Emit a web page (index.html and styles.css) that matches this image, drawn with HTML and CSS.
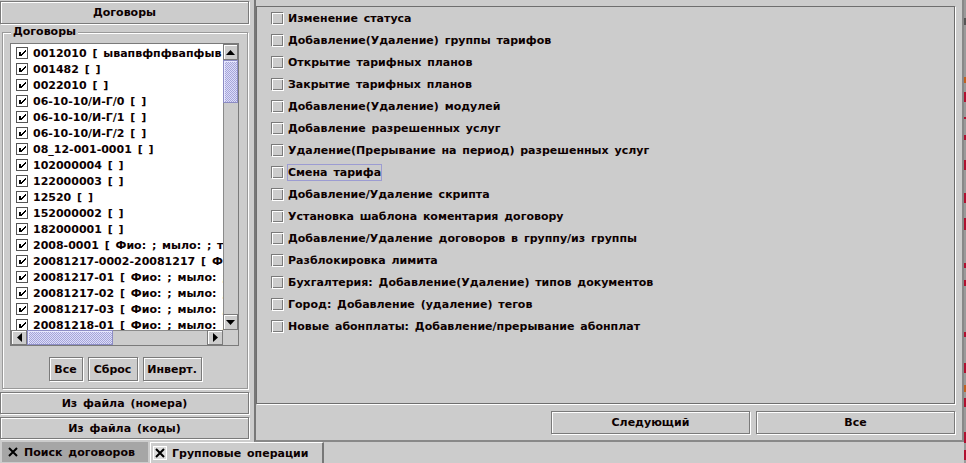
FILE: index.html
```html
<!DOCTYPE html>
<html lang="ru">
<head>
<meta charset="utf-8">
<title>Групповые операции</title>
<link rel="stylesheet" href="styles.css">
</head>
<body>
<svg class="defs" width="0" height="0" aria-hidden="true">
  <symbol id="box" viewBox="0 0 13 13">
    <rect x="0.5" y="0.5" width="11" height="11" fill="none" stroke="#7a7a7a"/>
    <rect x="1.5" y="1.5" width="11" height="11" fill="none" stroke="#ffffff"/>
  </symbol>
  <symbol id="chk" viewBox="0 0 13 13">
    <rect x="0.5" y="0.5" width="11" height="11" fill="none" stroke="#555555"/>
    <g fill="#000">
      <rect x="3" y="5" width="2" height="4"/>
      <rect x="9" y="3" width="1" height="2"/>
      <rect x="8" y="4" width="1" height="2"/>
      <rect x="7" y="5" width="1" height="2"/>
      <rect x="6" y="6" width="1" height="2"/>
      <rect x="5" y="7" width="1" height="2"/>
    </g>
  </symbol>
</svg>
<div class="screen">
  <div class="app">
    <div class="main">
      <div class="left">
        <div class="btn hdr">Договоры</div>
        <div class="group">
          <span class="group-title">Договоры</span>
          <div class="scrollpane">
            <div class="list">
              <div class="item"><svg class="cb"><use href="#chk"/></svg><span>0012010 [ ывапвфпфвапфыв ]</span></div>
              <div class="item"><svg class="cb"><use href="#chk"/></svg><span>001482 [ ]</span></div>
              <div class="item"><svg class="cb"><use href="#chk"/></svg><span>0022010 [ ]</span></div>
              <div class="item"><svg class="cb"><use href="#chk"/></svg><span>06-10-10/И-Г/0 [ ]</span></div>
              <div class="item"><svg class="cb"><use href="#chk"/></svg><span>06-10-10/И-Г/1 [ ]</span></div>
              <div class="item"><svg class="cb"><use href="#chk"/></svg><span>06-10-10/И-Г/2 [ ]</span></div>
              <div class="item"><svg class="cb"><use href="#chk"/></svg><span>08_12-001-0001 [ ]</span></div>
              <div class="item"><svg class="cb"><use href="#chk"/></svg><span>102000004 [ ]</span></div>
              <div class="item"><svg class="cb"><use href="#chk"/></svg><span>122000003 [ ]</span></div>
              <div class="item"><svg class="cb"><use href="#chk"/></svg><span>12520 [ ]</span></div>
              <div class="item"><svg class="cb"><use href="#chk"/></svg><span>152000002 [ ]</span></div>
              <div class="item"><svg class="cb"><use href="#chk"/></svg><span>182000001 [ ]</span></div>
              <div class="item"><svg class="cb"><use href="#chk"/></svg><span>2008-0001 [ Фио: ; мыло: ; тел: ]</span></div>
              <div class="item"><svg class="cb"><use href="#chk"/></svg><span>20081217-0002-20081217 [ Фио: ; мыло: ; ]</span></div>
              <div class="item"><svg class="cb"><use href="#chk"/></svg><span>20081217-01 [ Фио: ; мыло: ; тел: ]</span></div>
              <div class="item"><svg class="cb"><use href="#chk"/></svg><span>20081217-02 [ Фио: ; мыло: ; тел: ]</span></div>
              <div class="item"><svg class="cb"><use href="#chk"/></svg><span>20081217-03 [ Фио: ; мыло: ; тел: ]</span></div>
              <div class="item"><svg class="cb"><use href="#chk"/></svg><span>20081218-01 [ Фио: ; мыло: ; тел: ]</span></div>
            </div>
            <div class="vscroll">
              <div class="arrow av"><svg width="9" height="5" viewBox="0 0 9 5"><polygon points="4.5,0 9,5 0,5" fill="#000"/></svg></div>
              <div class="thumb tv"></div>
              <div class="track"></div>
              <div class="arrow av"><svg width="9" height="5" viewBox="0 0 9 5"><polygon points="0,0 9,0 4.5,5" fill="#000"/></svg></div>
            </div>
            <div class="hscroll">
              <div class="arrow ah"><svg width="5" height="9" viewBox="0 0 5 9"><polygon points="0,4.5 5,0 5,9" fill="#000"/></svg></div>
              <div class="thumb th"></div>
              <div class="track"></div>
              <div class="arrow ah"><svg width="5" height="9" viewBox="0 0 5 9"><polygon points="0,0 5,4.5 0,9" fill="#000"/></svg></div>
            </div>
            <div class="corner"></div>
          </div>
          <div class="btnrow">
            <div class="btn sm b1">Все</div>
            <div class="btn sm b2">Сброс</div>
            <div class="btn sm b3">Инверт.</div>
          </div>
        </div>
        <div class="btn wide">Из файла (номера)</div>
        <div class="btn wide">Из файла (коды)</div>
      </div>
      <div class="right">
        <div class="ops">
          <div class="op"><svg class="cb"><use href="#box"/></svg><span>Изменение статуса</span></div>
          <div class="op"><svg class="cb"><use href="#box"/></svg><span>Добавление(Удаление) группы тарифов</span></div>
          <div class="op"><svg class="cb"><use href="#box"/></svg><span>Открытие тарифных планов</span></div>
          <div class="op"><svg class="cb"><use href="#box"/></svg><span>Закрытие тарифных планов</span></div>
          <div class="op"><svg class="cb"><use href="#box"/></svg><span>Добавление(Удаление) модулей</span></div>
          <div class="op"><svg class="cb"><use href="#box"/></svg><span>Добавление разрешенных услуг</span></div>
          <div class="op"><svg class="cb"><use href="#box"/></svg><span>Удаление(Прерывание на период) разрешенных услуг</span></div>
          <div class="op"><svg class="cb"><use href="#box"/></svg><span class="focus">Смена тарифа</span></div>
          <div class="op"><svg class="cb"><use href="#box"/></svg><span>Добавление/Удаление скрипта</span></div>
          <div class="op"><svg class="cb"><use href="#box"/></svg><span>Установка шаблона коментария договору</span></div>
          <div class="op"><svg class="cb"><use href="#box"/></svg><span>Добавление/Удаление договоров в группу/из группы</span></div>
          <div class="op"><svg class="cb"><use href="#box"/></svg><span>Разблокировка лимита</span></div>
          <div class="op"><svg class="cb"><use href="#box"/></svg><span>Бухгалтерия: Добавление(Удаление) типов документов</span></div>
          <div class="op"><svg class="cb"><use href="#box"/></svg><span>Город: Добавление (удаление) тегов</span></div>
          <div class="op"><svg class="cb"><use href="#box"/></svg><span>Новые абонплаты: Добавление/прерывание абонплат</span></div>
        </div>
        <div class="actions">
          <div class="btn act">Следующий</div>
          <div class="btn act">Все</div>
        </div>
      </div>
    </div>
    <div class="tabs">
      <div class="tab tab-a">
        <svg class="x" width="10" height="10" viewBox="0 0 10 10"><path d="M1 1 L9 9 M9 1 L1 9" stroke="#000" stroke-width="2"/></svg>
        <span>Поиск договоров</span>
      </div>
      <div class="tab tab-b">
        <span class="xbox"><svg class="x" width="10" height="10" viewBox="0 0 10 10"><path d="M1 1 L9 9 M9 1 L1 9" stroke="#000" stroke-width="2"/></svg></span>
        <span>Групповые операции</span>
      </div>
    </div>
  </div>
  <div class="edge"></div>
</div>
</body>
</html>
```

FILE: styles.css
```css
html, body {
  margin: 0;
  padding: 0;
}

body {
  background: #cccccc;
  font-family: "DejaVu Sans", "Liberation Sans", sans-serif;
  font-weight: bold;
  font-size: 11px;
  word-spacing: 2px;
  color: #0d0000;
}

.defs {
  position: absolute;
  width: 0;
  height: 0;
  overflow: hidden;
}

.screen {
  display: flex;
  width: 966px;
  height: 463px;
  overflow: hidden;
}

.app {
  width: 964px;
  display: flex;
  flex-direction: column;
}

.edge {
  width: 2px;
  height: 463px;
  background: linear-gradient(to bottom,
    #9a9a9a 0, #9a9a9a 18px, #555 18px, #555 25px, #9a9a9a 25px, #9a9a9a 77px,
    #c06020 77px, #c06020 83px, #9a9a9a 83px, #9a9a9a 92px,
    #b01030 92px, #b01030 102px, #9a9a9a 102px, #9a9a9a 117px,
    #b01030 117px, #b01030 119px, #9a9a9a 119px, #9a9a9a 135px,
    #b01030 135px, #b01030 140px, #9a9a9a 140px, #9a9a9a 160px,
    #b01030 160px, #b01030 170px, #9a9a9a 170px, #9a9a9a 193px,
    #b01030 193px, #b01030 203px, #9a9a9a 203px, #9a9a9a 218px,
    #b01030 218px, #b01030 230px, #9a9a9a 230px, #9a9a9a 263px,
    #b01030 263px, #b01030 268px, #9a9a9a 268px, #9a9a9a 280px,
    #b01030 280px, #b01030 286px, #9a9a9a 286px, #9a9a9a 332px,
    #b01030 332px, #b01030 337px, #9a9a9a 337px, #9a9a9a 363px,
    #b01030 363px, #b01030 373px, #9a9a9a 373px, #9a9a9a 385px,
    #c06020 385px, #c06020 392px, #9a9a9a 392px, #9a9a9a 398px,
    #b01030 398px, #b01030 407px, #9a9a9a 407px, #9a9a9a 432px,
    #b01030 432px, #b01030 443px, #9a9a9a 443px, #9a9a9a 450px,
    #b01030 450px, #b01030 460px, #9a9a9a 460px);
}

.main {
  height: 442px;
  display: flex;
}

/* generic etched button */
.btn {
  box-sizing: border-box;
  border: 1px solid #7a7a7a;
  box-shadow: inset 1px 1px 0 #ffffff, 1px 1px 0 #ffffff;
  display: flex;
  align-items: center;
  justify-content: center;
  white-space: nowrap;
}

/* left column */
.left {
  width: 250px;
  flex: none;
  display: flex;
  flex-direction: column;
}

.hdr {
  margin-top: 1px;
  width: 249px;
  height: 23px;
}

.group {
  position: relative;
  box-sizing: border-box;
  margin: 8px 0 0 2px;
  width: 246px;
  height: 357px;
  border: 1px solid #999999;
  box-shadow: inset 1px 1px 0 #ffffff, 1px 1px 0 #ffffff;
  padding: 10px 0 0 7px;
}

.group-title {
  position: absolute;
  top: -8px;
  left: 8px;
  padding: 0 2px;
  line-height: 14px;
  background: #cccccc;
}

.scrollpane {
  box-sizing: border-box;
  width: 229px;
  height: 303px;
  border: 1px solid #7a7a7a;
  background: #ffffff;
  display: grid;
  grid-template-columns: 212px 15px;
  grid-template-rows: 286px 15px;
}

.list {
  overflow: hidden;
  padding-top: 1px;
}

.item {
  height: 16px;
  display: flex;
  align-items: center;
  padding-left: 5px;
  white-space: nowrap;
}

.cb {
  width: 13px;
  height: 13px;
  flex: none;
  margin-right: 4px;
}

.vscroll {
  display: flex;
  flex-direction: column;
  background: #cccccc;
  box-shadow: inset 1px 0 0 #8a8a8a;
}

.hscroll {
  display: flex;
  background: #cccccc;
  box-shadow: inset 0 1px 0 #8a8a8a;
}

.corner {
  background: #cccccc;
}

.arrow {
  box-sizing: border-box;
  border: 1px solid #7a7a7a;
  box-shadow: inset 1px 1px 0 #ffffff;
  background: #cccccc;
  display: flex;
  align-items: center;
  justify-content: center;
  flex: none;
}

.av {
  height: 16px;
}

.ah {
  width: 16px;
}

.track {
  flex: 1;
}

.thumb {
  box-sizing: border-box;
  border: 1px solid #8c8cc4;
  box-shadow: inset 1px 1px 0 #e8e8ff;
  background-color: #c4c4ee;
  background-image: repeating-conic-gradient(#a6a6d8 0 25%, #dcdcfa 0 50%);
  background-size: 2px 2px;
  flex: none;
}

.tv {
  height: 43px;
}

.th {
  width: 86px;
}

.btnrow {
  display: flex;
  justify-content: center;
  gap: 5px;
  margin: 11px 0 0 -7px;
  width: 244px;
}

.sm {
  height: 24px;
}

.b1 { width: 34px; }
.b2 { width: 50px; }
.b3 { width: 59px; }

.wide {
  margin-top: 3px;
  width: 249px;
  height: 22px;
}

/* right side */
.right {
  box-sizing: border-box;
  margin-left: 4px;
  width: 710px;
  border-left: 2px solid #777777;
  border-right: 2px solid #888888;
  border-bottom: 2px solid #888888;
  padding: 6px 7px 0 0;
  display: flex;
  flex-direction: column;
}

.ops {
  box-sizing: border-box;
  height: 398px;
  border: 1px solid #6e6e6e;
  box-shadow: 1px 1px 0 #ffffff;
  padding-left: 14px;
}

.op {
  height: 22px;
  display: flex;
  align-items: center;
  white-space: nowrap;
}

.focus {
  outline: 1px solid #9c9cd2;
  padding: 1px 0;
}

.actions {
  margin-top: 7px;
  display: flex;
  justify-content: flex-end;
  gap: 6px;
}

.act {
  width: 199px;
  height: 23px;
}

/* tabs */
.tabs {
  flex: 1;
  display: flex;
  align-items: flex-end;
}

.tab {
  box-sizing: border-box;
  display: flex;
  align-items: center;
  white-space: nowrap;
}

.tab-a {
  margin-left: 2px;
  width: 146px;
  height: 20px;
  margin-bottom: 1px;
  background: #a6a6a6;
  padding-left: 6px;
  gap: 6px;
}

.tab-b {
  margin-left: 2px;
  width: 174px;
  height: 21px;
  border-top: 1px solid #ffffff;
  border-left: 1px solid #ffffff;
  border-right: 2px solid #777777;
  padding-left: 2px;
  gap: 5px;
}

.xbox {
  box-sizing: border-box;
  width: 14px;
  height: 14px;
  border: 1px solid #ffffff;
  background: #dddddd;
  display: flex;
  align-items: center;
  justify-content: center;
}

.x {
  flex: none;
}
```
